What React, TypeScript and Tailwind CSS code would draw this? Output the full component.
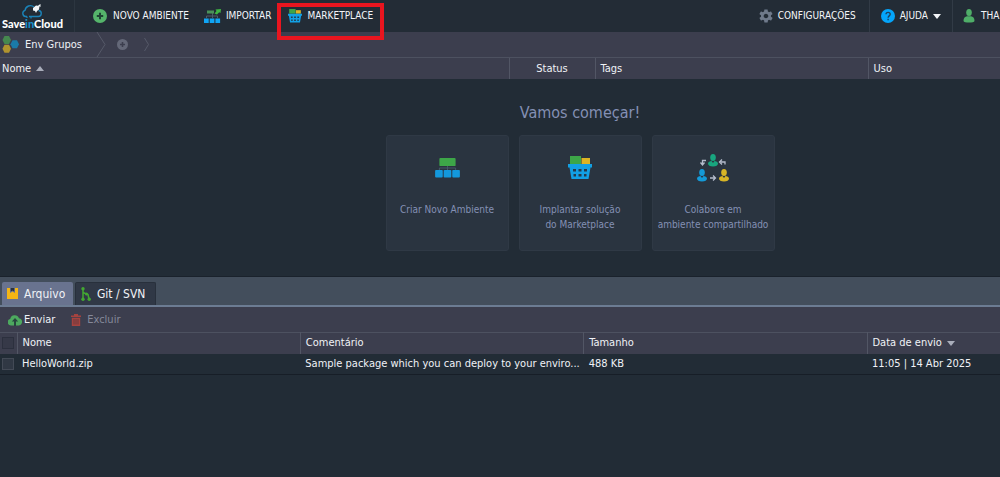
import React, { useState } from 'react';
import { IoMdSettings } from 'react-icons/io';

const Logo = () => (
  <a href="#" aria-label="SaveinCloud" className="flex w-[75px] shrink-0 flex-col border-r border-[#2c3640] pl-0.5">
    <svg width="60" height="15" viewBox="0 0 60 15" className="mt-1">
      <path d="M25 12.500h-1.500a3.200 3.200 0 0 1-.5-6.200a5.500 5.500 0 0 1 9-3.300M36.500 6.500a3 3 0 0 1-.5 6h-9" fill="none" stroke="#1b83b8" strokeWidth="1.400" />
      <path d="M31 4l3-2.500l3.500.5l-.5 3.500l-2 1.500l-1 2l-1-2l-2-.5z" fill="#f2f5f8" />
      <path d="M36 1.500l2.500-1.500v3z" fill="#f2f5f8" />
      <path d="M29 12.500v2M25 12.500v1.500" stroke="#1b83b8" strokeWidth="1.300" />
    </svg>
    <span className="font-[Lato] text-[11px] leading-[10px] font-black text-white">
      Save<span className="text-[#1690cc]">in</span>Cloud
    </span>
  </a>
);

const PlusIcon = ({ color, cross, size }: { color: string; cross: string; size: number }) => (
  <svg width={size} height={size} viewBox="0 0 14 14">
    <circle cx="7" cy="7" r="7" fill={color} />
    <path d="M7 3.800v6.400M3.800 7h6.400" stroke={cross} strokeWidth="2" />
  </svg>
);

const EnvIcon = ({ width, height }: { width: number; height: number }) => (
  <svg width={width} height={height} viewBox="0 0 26 21">
    <path d="M13 8v5M4.500 13v-2.500h17V13" fill="none" stroke="#46586a" strokeWidth="1" />
    <rect x="4.500" y="0" width="17" height="8.500" rx="1" fill="#3da648" />
    <rect x="0" y="12.500" width="8" height="8" rx="1" fill="#1398dc" />
    <rect x="9" y="12.500" width="8" height="8" rx="1" fill="#1398dc" />
    <rect x="18" y="12.500" width="8" height="8" rx="1" fill="#1398dc" />
  </svg>
);

const ImportIcon = () => (
  <svg width="17" height="14" viewBox="0 0 17 14">
    <path d="M8.500 4v5M2.500 9V7h11v2" fill="none" stroke="#4c5d6b" />
    <rect x="3" y="1.500" width="7" height="3" fill="#4a9258" />
    <path d="M17 0l-.5 4l-1.300-.8L13 5.500L10.500 4.500l2-2.500L11.500.500z" fill="#3fb543" />
    <rect x="0" y="9.500" width="4.700" height="4.500" fill="#10a5f5" />
    <rect x="5.700" y="9.500" width="4.700" height="4.500" fill="#10a5f5" />
    <rect x="11.400" y="9.500" width="4.700" height="4.500" fill="#10a5f5" />
  </svg>
);

const BasketIcon = ({ width, height }: { width: number; height: number }) => (
  <svg width={width} height={height} viewBox="0 0 24 24">
    <rect x="2" y="0" width="11" height="8" fill="#3da648" />
    <rect x="13.500" y="2" width="8.500" height="6" fill="#dcb424" />
    <path d="M0 8h24v3.500h-1.500L20.500 23h-17L1.500 11.500H0z" fill="#12a0e4" />
    <path d="M5 13h3v2.500H5zM10.500 13h3v2.500h-3zM16 13h3v2.500h-3zM5.500 18h2.500v2.500H5.500zM10.500 18h3v2.500h-3zM16 18h2.500v2.500H16z" fill="#24394a" />
  </svg>
);

const Person = ({ x, y, color }: { x: number; y: number; color: string }) => (
  <g transform={`translate(${x} ${y})`} fill={color}>
    <ellipse cx="5" cy="3.500" rx="2.800" ry="3.500" />
    <path d="M0 9.500C0 8 2 7.200 3.500 7L5 9L6.500 7C8 7.200 10 8 10 9.500C10 11.500 8 12.500 5 12.500S0 11.500 0 9.500z" />
  </g>
);

const ShareIcon = () => (
  <svg width="32" height="28" viewBox="0 0 32 28">
    <Person x={11} y={0} color="#18a57f" />
    <Person x={0} y={15} color="#149ad8" />
    <Person x={22} y={15} color="#d8b526" />
    <path d="M9 6.500H5.500V10M3.500 8.500l2 2.500l2-2.500M28 10.500V8h-4.500M25 5.500L22.500 8L25 10.500M13 24h5M16 21.500l2.500 2.500l-2.500 2.500" fill="none" stroke="#b5bccc" strokeWidth="1.300" />
  </svg>
);

const GroupsIcon = () => (
  <svg width="17" height="17" viewBox="0 0 17 17">
    <path d="M2.500 0h4.500l2 4l-2 4H2.500L.5 4z" fill="#46884f" />
    <path d="M10.500 4.300h4.500l2 4l-2 4h-4.500l-2-4z" fill="#1b7ba8" />
    <path d="M2.500 8.800h4.500l2 4l-2 4H2.500l-2-4z" fill="#b1942f" />
  </svg>
);

const Chevron = ({ height, width }: { height: number; width: number }) => (
  <svg width={width} height={height} viewBox="0 0 10 26" preserveAspectRatio="none">
    <path d="M1 0l8 13l-8 13" fill="none" stroke="#565a69" vectorEffect="non-scaling-stroke" />
  </svg>
);

const Caret = ({ up = false, color }: { up?: boolean; color: string }) => (
  <svg width="8" height="5" viewBox="0 0 8 5" className="shrink-0">
    <path d={up ? 'M0 5L4 0L8 5z' : 'M0 0L4 5L8 0z'} fill={color} />
  </svg>
);

const UserIcon = () => (
  <svg width="12" height="14" viewBox="0 0 12 14" className="shrink-0">
    <ellipse cx="6" cy="3.500" rx="2.800" ry="3.500" fill="#4fae68" />
    <path d="M.5 12C.5 9 2 7.500 4 7.300h4c2 .2 3.500 1.700 3.500 4.700c0 2-11 2-11 0z" fill="#4fae68" />
  </svg>
);

const HelpIcon = () => (
  <svg width="14" height="14" viewBox="0 0 14 14">
    <circle cx="7" cy="7" r="7" fill="#04a5fb" />
    <path d="M5 5.300c0-2.700 4.200-2.500 4.200 0c0 1.500-2.100 1.700-2.100 3.400M7.100 9.800v1.500" fill="none" stroke="#1c4260" strokeWidth="1.400" />
  </svg>
);

const ArchiveIcon = () => (
  <svg width="11" height="11" viewBox="0 0 11 11">
    <path d="M0 0h3v5l2.500-1.500L8 5V0h3v11H0z" fill="#f3b515" />
    <path d="M3.800 0h3.400v3.500L5.500 2.500l-1.700 1z" fill="#2b3340" />
  </svg>
);

const GitIcon = () => (
  <svg width="10" height="14" viewBox="0 0 10 14">
    <path d="M2 1v12M2 5.500l5 2l1 4.500" fill="none" stroke="#43a832" strokeWidth="1.500" />
    <circle cx="2" cy="1.700" r="1.700" fill="#43a832" />
    <circle cx="2" cy="12.300" r="1.700" fill="#43a832" />
    <circle cx="5.500" cy="7" r="1.500" fill="#43a832" />
    <circle cx="8.200" cy="12.300" r="1.700" fill="#43a832" />
  </svg>
);

const UploadIcon = () => (
  <svg width="14" height="12" viewBox="0 0 14 12">
    <path d="M3 11.500A3.300 3.300 0 0 1 2.200 5A4.600 4.600 0 0 1 11 4.200A3.700 3.700 0 0 1 11 11.500z" fill="#4da95f" />
    <path d="M7 4L3.800 7.500H6V12h2V7.500h2.200z" fill="#27443f" />
  </svg>
);

const TrashIcon = () => (
  <svg width="10" height="12" viewBox="0 0 10 12">
    <path d="M0 1.500h3V0h4v1.500h3V3H0zM.8 3.800h8.400V12H.8z" fill="#a5433f" />
    <path d="M3 5v5.500M5 5v5.500M7 5v5.500" stroke="#5c3840" strokeWidth=".8" />
  </svg>
);

const cards = [
  { icon: <EnvIcon width={25} height={20} />, lines: ['Criar Novo Ambiente'] },
  { icon: <BasketIcon width={24} height={24} />, lines: ['Implantar solução', 'do Marketplace'] },
  { icon: <ShareIcon />, lines: ['Colabore em', 'ambiente compartilhado'] },
];

const archivos = [
  {
    nome: 'HelloWorld.zip',
    comentario: 'Sample package which you can deploy to your enviro...',
    tamanho: '488 KB',
    data: '11:05 | 14 Abr 2025',
  },
];

const TopBar = () => (
  <header className="flex h-8 bg-[#232c36] text-[10px] whitespace-nowrap text-[#f4f6f9]">
    <Logo />
    <button className="flex items-center gap-[6px] pl-[18px]">
      <PlusIcon color="#55b56b" cross="#1f4634" size={14} />
      NOVO AMBIENTE
    </button>
    <button className="flex items-center gap-[5px] pl-[15px]">
      <ImportIcon />
      IMPORTAR
    </button>
    <button className="relative ml-[6px] flex items-center gap-[5px] px-[11px]">
      <BasketIcon width={14} height={14} />
      MARKETPLACE
      <span className="absolute inset-x-0 top-[3px] -bottom-2 border-4 border-[#e9151f]" />
    </button>
    <div className="ml-auto flex">
      <button className="flex items-center gap-[4px] border-r border-[#323b46] pr-[13px]">
        <IoMdSettings size={16} color="#6f7a8b" />
        CONFIGURAÇÕES
      </button>
      <button className="flex items-center gap-[5px] border-r border-[#323b46] px-[11px]">
        <HelpIcon />
        AJUDA
        <Caret color="#f4f6f9" />
      </button>
      <button className="flex w-[47px] items-center gap-[6px] pl-[10px]">
        <UserIcon />
        THA
      </button>
    </div>
  </header>
);

const App: React.FC = () => {
  const [tab, setTab] = useState('arquivo');

  return (
    <div className="flex min-h-screen flex-col bg-[#222c36] font-['DejaVu_Sans_Condensed','DejaVu_Sans','Noto_Sans',sans-serif] text-[11px] leading-4 text-[#f0f2f6]">
      <TopBar />

      {/* grupos */}
      <nav className="flex h-[26px] items-center border-b border-[#4d5160] bg-[#3c3e4e] pl-[2px]">
        <a href="#" className="flex w-[94px] items-center gap-[6px]">
          <GroupsIcon />
          Env Grupos
        </a>
        <Chevron width={10} height={25} />
        <button aria-label="Adicionar grupo" className="mr-[16px] ml-[11px]">
          <PlusIcon color="#646878" cross="#3c3e4e" size={11} />
        </button>
        <Chevron width={5} height={13} />
      </nav>

      <table className="w-full table-fixed bg-[#3c3e4e] text-left">
        <colgroup>
          <col />
          <col className="w-[86px]" />
          <col className="w-[273px]" />
          <col className="w-[132px]" />
        </colgroup>
        <thead>
          <tr className="h-[21px]">
            <th className="pl-[2px] font-normal">
              <span className="flex items-center gap-[5px]">Nome <Caret up color="#a9adba" /></span>
            </th>
            <th className="border-l border-[#525665] text-center font-normal">Status</th>
            <th className="border-l border-[#525665] pl-[5px] font-normal">Tags</th>
            <th className="border-l border-[#525665] pl-[5px] font-normal">Uso</th>
          </tr>
        </thead>
      </table>

      <main className="flex flex-col items-center border-b border-[#1a222c] pt-[22px] pb-[25px] pl-40">
        <h1 className="text-[16px] leading-6 text-[#8490b4]">Vamos começar!</h1>
        <div className="mt-[10px] grid grid-cols-3 gap-[10px]">
          {cards.map((card) => (
            <button key={card.lines[0]} className="flex h-[116px] w-[123px] flex-col items-center rounded-[3px] border border-[#2f3945] bg-[#2a3440] text-[10px] leading-[15px] whitespace-nowrap text-[#8490b4]">
              <span className="mt-[9px] mb-[11px] flex h-[46px] items-center">{card.icon}</span>
              {card.lines.map((line) => (
                <span key={line}>{line}</span>
              ))}
            </button>
          ))}
        </div>
      </main>

      {/* pestañas */}
      <div className="flex h-[30px] items-end gap-[2px] border-b-2 border-[#6c7c93] bg-[#434e5c] pl-[2px] text-[12px]">
        <button
          onClick={() => setTab('arquivo')}
          className={`flex h-[23px] w-[71px] items-center gap-[6px] rounded-t-[2px] pl-[5px] ${tab === 'arquivo' ? 'bg-[#69738f]' : 'bg-[#303846]'}`}
        >
          <ArchiveIcon />
          Arquivo
        </button>
        <button
          onClick={() => setTab('git')}
          className={`flex h-[23px] w-[81px] items-center gap-[6px] rounded-t-[2px] border border-b-0 border-[#28303c] pl-[5px] ${tab === 'git' ? 'bg-[#69738f]' : 'bg-[#303846]'}`}
        >
          <GitIcon />
          Git / SVN
        </button>
      </div>

      <div className="flex h-[25px] items-center gap-4 bg-[#3c3e4e] pl-2">
        <button className="flex items-center gap-[2px]">
          <UploadIcon />
          Enviar
        </button>
        <button disabled className="flex items-center gap-[6px] text-[#85899a]">
          <TrashIcon />
          Excluir
        </button>
      </div>

      <table className="w-full table-fixed text-left">
        <colgroup>
          <col className="w-[17px]" />
          <col />
          <col />
          <col />
          <col className="w-[133px]" />
        </colgroup>
        <thead>
          <tr className="h-[21px] border-t border-[#4d5160] bg-[#3c3e4e]">
            <th className="pl-[2px]">
              <input type="checkbox" aria-label="Selecionar todos" className="block size-3 appearance-none border border-[#2c303e] bg-[#363948]" />
            </th>
            <th className="border-l border-[#525665] pl-[5px] font-normal">Nome</th>
            <th className="border-l border-[#525665] pl-[5px] font-normal">Comentário</th>
            <th className="border-l border-[#525665] pl-[5px] font-normal">Tamanho</th>
            <th className="border-l border-[#525665] pl-[5px] font-normal">
              <span className="flex items-center gap-[5px]">Data de envio <Caret color="#a9adba" /></span>
            </th>
          </tr>
        </thead>
        <tbody>
          {archivos.map((a) => (
            <tr key={a.nome} className="h-[21px] border-b border-[#171e27]">
              <td className="pl-[2px]">
                <input type="checkbox" aria-label={a.nome} className="block size-3 appearance-none border border-[#434a56] bg-[#303844]" />
              </td>
              <td className="pl-[5px]">{a.nome}</td>
              <td className="truncate pl-[5px]">{a.comentario}</td>
              <td className="pl-[5px]">{a.tamanho}</td>
              <td className="pl-[5px] whitespace-nowrap">{a.data}</td>
            </tr>
          ))}
        </tbody>
      </table>
    </div>
  );
};

export default App;
